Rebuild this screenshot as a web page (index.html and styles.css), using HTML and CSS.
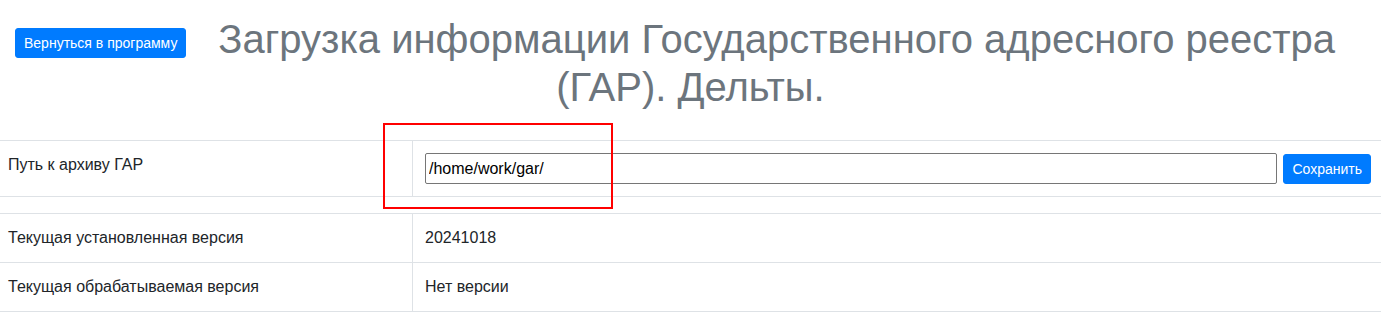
FILE: index.html
```html
<!DOCTYPE html>
<html lang="ru">
<head>
    <meta charset="UTF-8">
    <title>Загрузка ГАР - Дельты</title>
    <link rel="stylesheet" href="styles.css">
</head>
<body>
    <div class="header">
        <button class="btn btn-back" type="button">Вернуться в программу</button>
        <h1 class="title">Загрузка информации Государственного адресного реестра (ГАР). Дельты.</h1>
    </div>

    <!-- Настройки пути -->
    <table class="info-table table-path">
        <tr>
            <td class="cell-label">Путь к архиву ГАР</td>
            <td class="cell-value">
                <div class="path-form">
                    <input type="text" class="path-input" value="/home/work/gar/">
                    <button class="btn btn-save" type="button">Сохранить</button>
                </div>
            </td>
        </tr>
    </table>

    <!-- Версии -->
    <table class="info-table">
        <tr>
            <td class="cell-label">Текущая установленная версия</td>
            <td class="cell-value">20241018</td>
        </tr>
        <tr>
            <td class="cell-label">Текущая обрабатываемая версия</td>
            <td class="cell-value">Нет версии</td>
        </tr>
    </table>

    <div class="highlight"></div>
</body>
</html>
```

FILE: styles.css
```css
:root {
    --primary-color: #007bff;
    --border-color: #dee2e6;
    --text-color: #212529;
    --muted-color: #6c757d;
}

body, html {
    margin: 0;
    padding: 0;
}
body {
    font-family: 'Liberation Sans', Arial, sans-serif;
    font-size: 16px;
    line-height: 1.5;
    color: var(--text-color);
    background: #fff;
    position: relative;
}

.header {
    padding: 15px 15px 0;
    height: 140px;
    box-sizing: border-box;
}
.btn {
    font-family: inherit;
    font-size: 14px;
    line-height: 20px;
    padding: 4px 8px;
    color: #fff;
    background-color: var(--primary-color);
    border: 1px solid var(--primary-color);
    border-radius: 3px;
    cursor: pointer;
}
.btn-back {
    float: left;
    margin: 13px 1px 0 0;
}
.title {
    margin: 0;
    font-size: 40px;
    font-weight: 400;
    line-height: 48px;
    color: var(--muted-color);
    text-align: center;
}

.info-table {
    width: 100%;
    border-collapse: collapse;
}
.table-path {
    margin-bottom: 16px;
}
.info-table td {
    border-top: 1px solid var(--border-color);
    border-bottom: 1px solid var(--border-color);
    vertical-align: top;
    padding: 12px;
}
.info-table .cell-label {
    width: 392px;
    padding-left: 8px;
    border-right: 1px solid var(--border-color);
}
.info-table .cell-value {
    padding-right: 10px;
}

.path-form {
    display: flex;
    align-items: center;
}
.path-input {
    flex: 1;
    height: 31px;
    box-sizing: border-box;
    margin: 0 6px 0 0;
    padding: 1px 3px;
    font-family: inherit;
    font-size: 16px;
    color: #000;
    border: 1px solid #767676;
    border-radius: 2px;
}

/* рамка-выделение поверх таблицы */
.highlight {
    position: absolute;
    left: 383px;
    top: 123px;
    width: 226px;
    height: 82px;
    border: 2px solid #f00;
    pointer-events: none;
}
```
